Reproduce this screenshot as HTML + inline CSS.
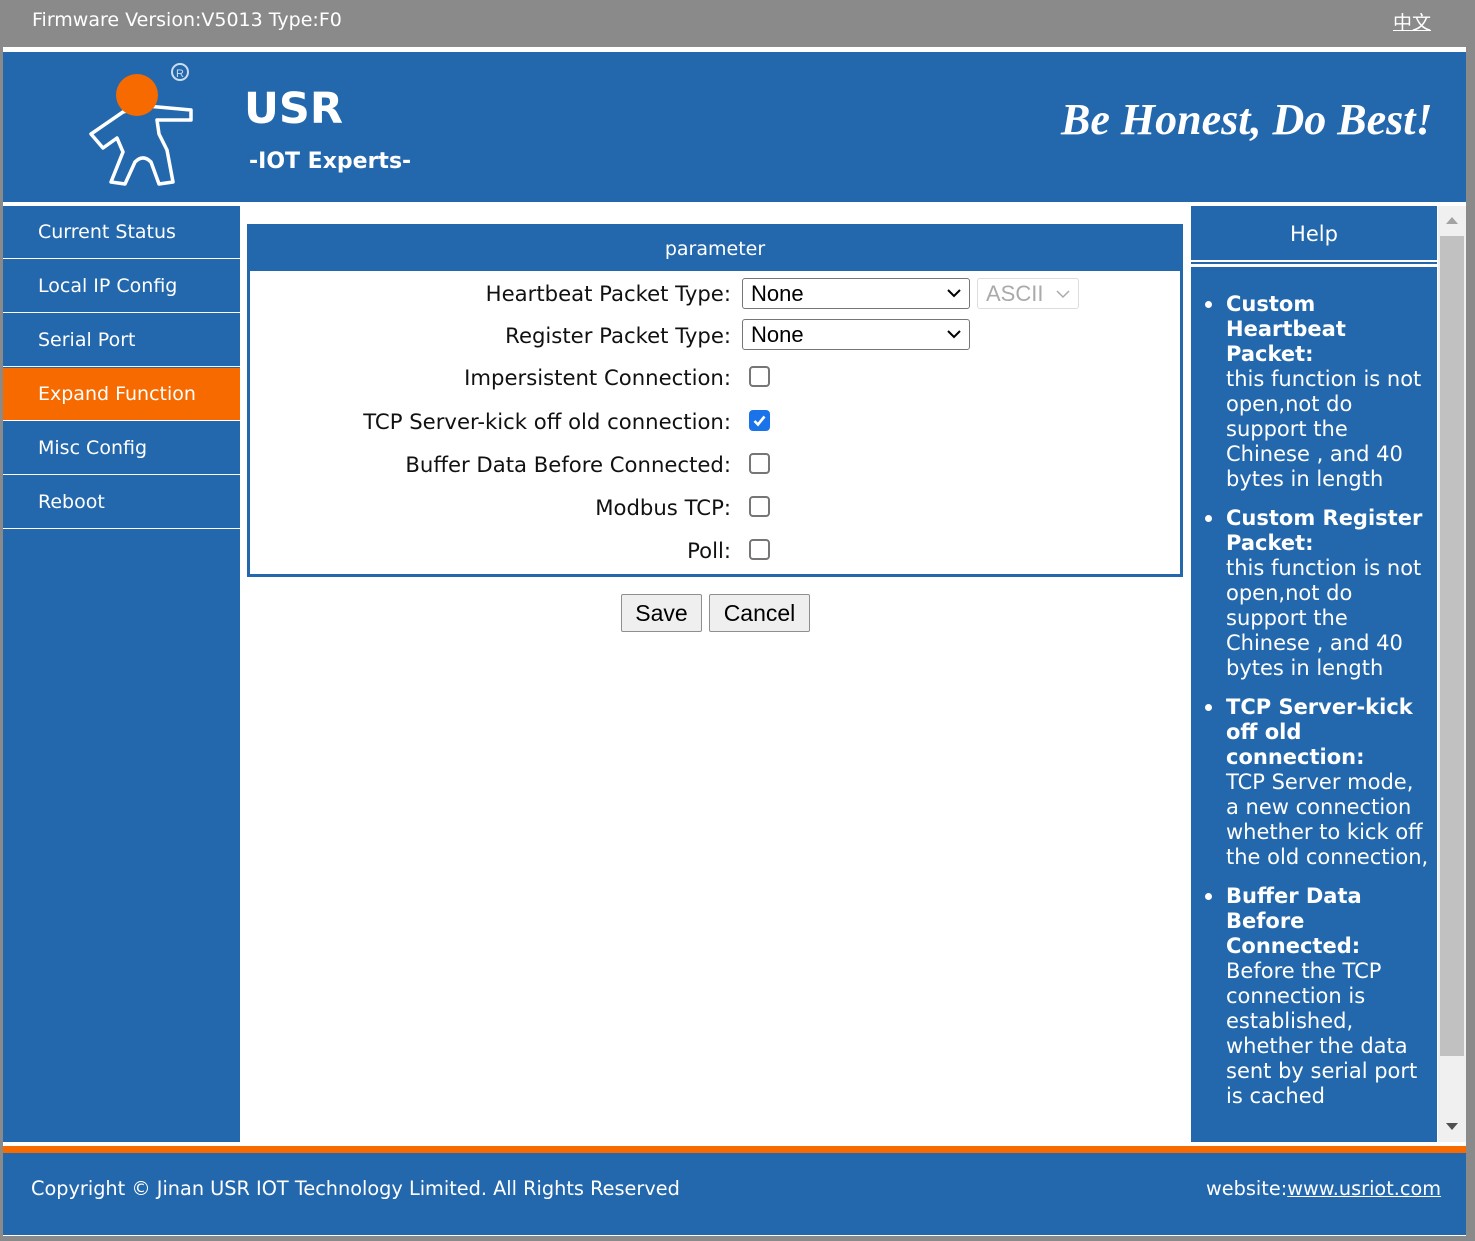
<!DOCTYPE html>
<html><head><meta charset="utf-8"><style>
*{margin:0;padding:0;box-sizing:border-box}
body{width:1475px;height:1241px;background:#8a8a8a;position:relative;overflow:hidden;font-family:"DejaVu Sans",sans-serif;}
.a{position:absolute}
.top{left:3px;top:0;width:1463px;height:47px;background:#8a8a8a;color:#fff;font-size:19px}
.hdr{left:3px;top:52px;width:1463px;height:150px;background:#2368ad}
.side{left:3px;top:206px;width:237px;height:936px;background:#2368ad}
.nav{position:absolute;left:0;width:237px;height:53px;color:#fff;font-size:19px;padding-left:35px;line-height:53px;border-bottom:1px solid #fff}
.main{left:240px;top:204px;width:950px;height:940px;background:#fff}
.lbl{position:absolute;right:459px;font-size:21.2px;color:#111;white-space:nowrap}
.cb{position:absolute;left:509px;width:21px;height:21px;border:2px solid #767676;border-radius:4px;background:#fff}
.sel{position:absolute;left:502px;width:228px;height:31px;border:1px solid #767676;border-radius:3px;font-size:22px;font-family:"Liberation Sans",sans-serif;padding-left:8px;line-height:29px;color:#000}
.btn{position:absolute;top:390px;height:38px;border:1px solid #8f8f8f;border-radius:2px;background:#efefef;font-family:"Liberation Sans",sans-serif;font-size:23px;line-height:36px;text-align:center;color:#000}
.help{left:1191px;top:206px;width:246px;height:936px;background:#fff}
.hl{position:absolute;left:35px;font-size:21px;color:#fff;white-space:nowrap;line-height:25px}
.b{font-weight:bold}
.dot{position:absolute;left:14px;width:7px;height:7px;border-radius:50%;background:#fff}
</style></head><body>
<div class="a" style="left:3px;top:0;width:1463px;height:1236px;background:#fff"></div>
<div class="a top"><div class="a" style="left:29px;top:9px">Firmware Version:V5013 Type:F0</div><div class="a" style="left:1390px;top:8px;text-decoration:underline;font-family:'Noto Sans CJK SC',sans-serif;font-size:19px">中文</div></div>
<div class="a hdr">
<svg class="a" style="left:78px;top:10px" width="120" height="130" viewBox="0 0 120 130">
<circle cx="99" cy="10" r="8" fill="none" stroke="#cde" stroke-width="2"/><text x="95" y="15" font-size="11" fill="#cde" font-family="Liberation Sans">R</text>
<path d="M42 50 L10 72 L22 86 L36 76 L42 90 L30 120 L44 122 L54 100 Q62 92 70 100 L78 122 L92 120 L86 88 L78 72 L76 58 L110 58 L110 48 L66 44 Z" fill="none" stroke="#fff" stroke-width="3.5" stroke-linejoin="round"/>
<circle cx="56" cy="33" r="21" fill="#f66a00"/>
</svg>
<div class="a" style="left:241px;top:32px;color:#fff;font-size:43px;font-weight:bold;font-family:'DejaVu Sans',sans-serif">USR</div>
<div class="a" style="left:246px;top:97px;color:#fff;font-size:22px;font-weight:bold">-IOT Experts-</div>
<div class="a" style="left:1058px;top:42px;color:#fff;font-size:44px;font-weight:bold;font-style:italic;font-family:'Liberation Serif',serif;white-space:nowrap">Be Honest, Do Best!</div>
</div>
<div class="a side">
<div class="nav" style="top:0">Current Status</div>
<div class="nav" style="top:54px">Local IP Config</div>
<div class="nav" style="top:108px">Serial Port</div>
<div class="nav" style="top:162px;background:#f66a00">Expand Function</div>
<div class="nav" style="top:216px">Misc Config</div>
<div class="nav" style="top:270px">Reboot</div>
</div>
<div class="a main">
<div class="a" style="left:7px;top:20px;width:936px;height:353px;border:3px solid #2368ad;border-top:none;background:#fff"></div>
<div class="a" style="left:7px;top:20px;width:936px;height:47px;background:#2368ad;color:#fff;font-size:19px;text-align:center;line-height:50px">parameter</div>
<div class="lbl" style="top:77px">Heartbeat Packet Type:</div>
<div class="sel" style="top:74px">None<svg class="a" style="right:8px;top:10px" width="14" height="9"><path d="M1 1 L7 7 L13 1" stroke="#000" stroke-width="2" fill="none"/></svg></div>
<div class="a" style="left:737px;top:74px;width:102px;height:31px;border:1px solid #ddd;border-radius:3px;color:#aaa;font-size:22px;font-family:'Liberation Sans',sans-serif;padding-left:8px;line-height:29px">ASCII<svg class="a" style="right:8px;top:11px" width="14" height="9"><path d="M1 1 L7 7 L13 1" stroke="#aaa" stroke-width="1.5" fill="none"/></svg></div>
<div class="lbl" style="top:119px">Register Packet Type:</div>
<div class="sel" style="top:115px">None<svg class="a" style="right:8px;top:10px" width="14" height="9"><path d="M1 1 L7 7 L13 1" stroke="#000" stroke-width="2" fill="none"/></svg></div>
<div class="lbl" style="top:161px">Impersistent Connection:</div><div class="cb" style="top:162px"></div>
<div class="lbl" style="top:205px">TCP Server-kick off old connection:</div>
<div class="cb" style="top:206px;background:#1a73e8;border-color:#1a73e8"><svg width="17" height="17" viewBox="0 0 17 17" style="position:absolute;left:0;top:0"><path d="M3.5 9 L7 12.5 L13.5 4.5" stroke="#fff" stroke-width="2.6" fill="none"/></svg></div>
<div class="lbl" style="top:248px">Buffer Data Before Connected:</div><div class="cb" style="top:249px"></div>
<div class="lbl" style="top:291px">Modbus TCP:</div><div class="cb" style="top:292px"></div>
<div class="lbl" style="top:334px">Poll:</div><div class="cb" style="top:335px"></div>
<div class="btn" style="left:381px;width:81px">Save</div>
<div class="btn" style="left:469px;width:101px">Cancel</div>
</div>
<div class="a help">
<div class="a" style="left:0;top:0;width:246px;height:54px;background:#2368ad;color:#fff;font-size:21px;text-align:center;line-height:56px">Help</div>
<div class="a" style="left:0;top:56px;width:246px;height:2px;background:#2368ad"></div>
<div class="a" style="left:0;top:61px;width:246px;height:875px;background:#2368ad"></div>
<div class="dot" style="top:95px"></div>
<div class="hl b" style="top:86px">Custom<br>Heartbeat<br>Packet:</div>
<div class="hl" style="top:161px">this function is not<br>open,not do<br>support the<br>Chinese , and 40<br>bytes in length</div>
<div class="dot" style="top:309px"></div>
<div class="hl b" style="top:300px">Custom Register<br>Packet:</div>
<div class="hl" style="top:350px">this function is not<br>open,not do<br>support the<br>Chinese , and 40<br>bytes in length</div>
<div class="dot" style="top:498px"></div>
<div class="hl b" style="top:489px">TCP Server-kick<br>off old<br>connection:</div>
<div class="hl" style="top:564px">TCP Server mode,<br>a new connection<br>whether to kick off<br>the old connection,</div>
<div class="dot" style="top:687px"></div>
<div class="hl b" style="top:678px">Buffer Data<br>Before<br>Connected:</div>
<div class="hl" style="top:753px">Before the TCP<br>connection is<br>established,<br>whether the data<br>sent by serial port<br>is cached</div>
</div>
<div class="a" style="left:1438px;top:206px;width:28px;height:936px;background:#f0f0f0"></div>
<div class="a" style="left:1440px;top:236px;width:24px;height:820px;background:#c1c1c1"></div>
<div class="a" style="left:1446px;top:217px;width:0;height:0;border-left:6px solid transparent;border-right:6px solid transparent;border-bottom:7px solid #a3a3a3"></div>
<div class="a" style="left:1446px;top:1123px;width:0;height:0;border-left:6px solid transparent;border-right:6px solid transparent;border-top:7px solid #505050"></div>
<div class="a" style="left:3px;top:1146px;width:1463px;height:7px;background:#f66a00"></div>
<div class="a" style="left:3px;top:1153px;width:1463px;height:82px;background:#2368ad;color:#fff;font-size:19.3px">
<div class="a" style="left:28px;top:24px;white-space:nowrap">Copyright © Jinan USR IOT Technology Limited. All Rights Reserved</div>
<div class="a" style="left:1203px;top:24px;white-space:nowrap">website:<u>www.usriot.com</u></div>
</div>
</body></html>
